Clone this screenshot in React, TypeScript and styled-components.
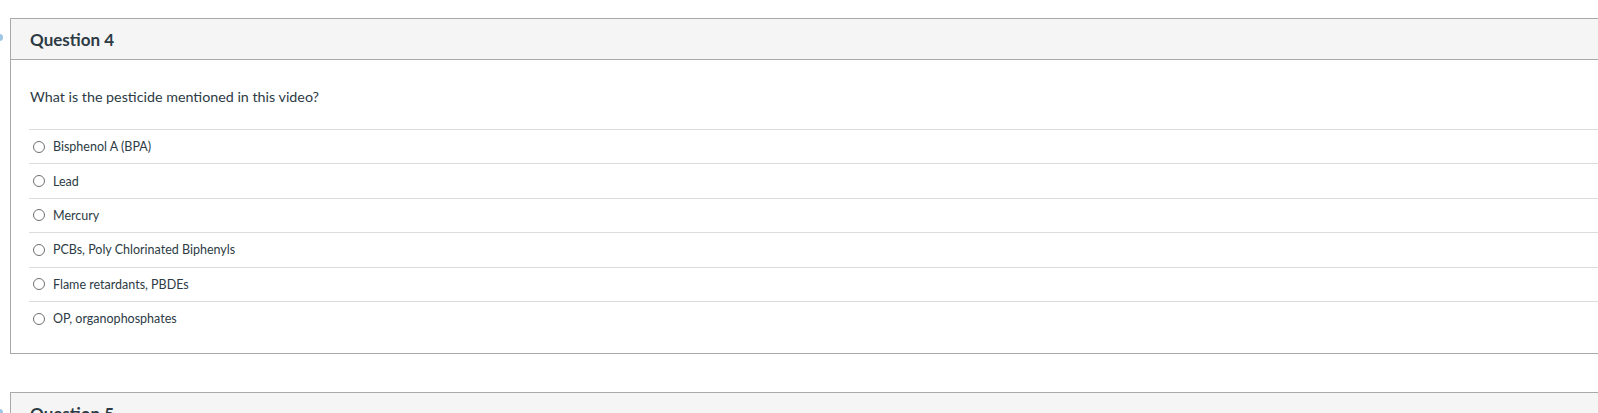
import React from 'react';
import styled, { createGlobalStyle } from 'styled-components';

const GlobalStyle = createGlobalStyle`
  html, body {
    margin: 0;
    padding: 0;
    background: #fff;
    font-family: Lato, "Noto Sans", sans-serif;
    color: #2d3b45;
    overflow: hidden;
  }
`;

const answers = [
  'Bisphenol A (BPA)',
  'Lead',
  'Mercury',
  'PCBs, Poly Chlorinated Biphenyls',
  'Flame retardants, PBDEs',
  'OP, organophosphates',
];

const Page = styled.div`
  position: relative;
  padding: 18px 0 0 10px;
  width: 1598px;
  height: 413px;
  box-sizing: border-box;
  overflow: hidden;
`;

const Marker = styled.span<{ $top: number }>`
  position: absolute;
  left: -4px;
  top: ${(p) => p.$top}px;
  width: 7px;
  height: 7px;
  border-radius: 50%;
  background: #9fc7e3;
`;

const Card = styled.div`
  border: 1px solid #a9a9a9;
  margin-right: -4px;
  margin-bottom: 38px;
`;

const Header = styled.div`
  height: 40px;
  background: #f5f5f5;
  border-bottom: 1px solid #a9a9a9;
  display: flex;
  align-items: center;
  padding-left: 19px;
`;

const Title = styled.h2`
  margin: 0;
  font-size: 17px;
  font-weight: 700;
  color: #2d3b45;
`;

const Body = styled.div`
  padding: 19px 0 18px 18px;
`;

const Prompt = styled.p`
  margin: 0 0 14px 1px;
  font-size: 14.3px;
  line-height: 36px;
  color: #2d3b45;
`;

const AnswerList = styled.div`
  display: flex;
  flex-direction: column;
`;

const Answer = styled.label`
  display: flex;
  align-items: center;
  gap: 8px;
  height: 33.4px;
  padding-left: 4px;
  border-top: 1px solid #dcdcdc;
  font-size: 12.5px;
  color: #2d3b45;
`;

const Radio = styled.span`
  width: 12px;
  height: 12px;
  box-sizing: border-box;
  border: 1px solid #707070;
  border-radius: 50%;
  background: #fff;
  flex: none;
`;

export default function App() {
  return (
    <>
      <GlobalStyle />
      <Page>
        <Marker $top={34} />
        <Card>
          <Header>
            <Title>Question 4</Title>
          </Header>
          <Body>
            <Prompt>What is the pesticide mentioned in this video?</Prompt>
            <AnswerList>
              {answers.map((a) => (
                <Answer key={a}>
                  <Radio />
                  {a}
                </Answer>
              ))}
            </AnswerList>
          </Body>
        </Card>
        <Marker $top={409} />
        <Card>
          <Header>
            <Title>Question 5</Title>
          </Header>
        </Card>
      </Page>
    </>
  );
}
